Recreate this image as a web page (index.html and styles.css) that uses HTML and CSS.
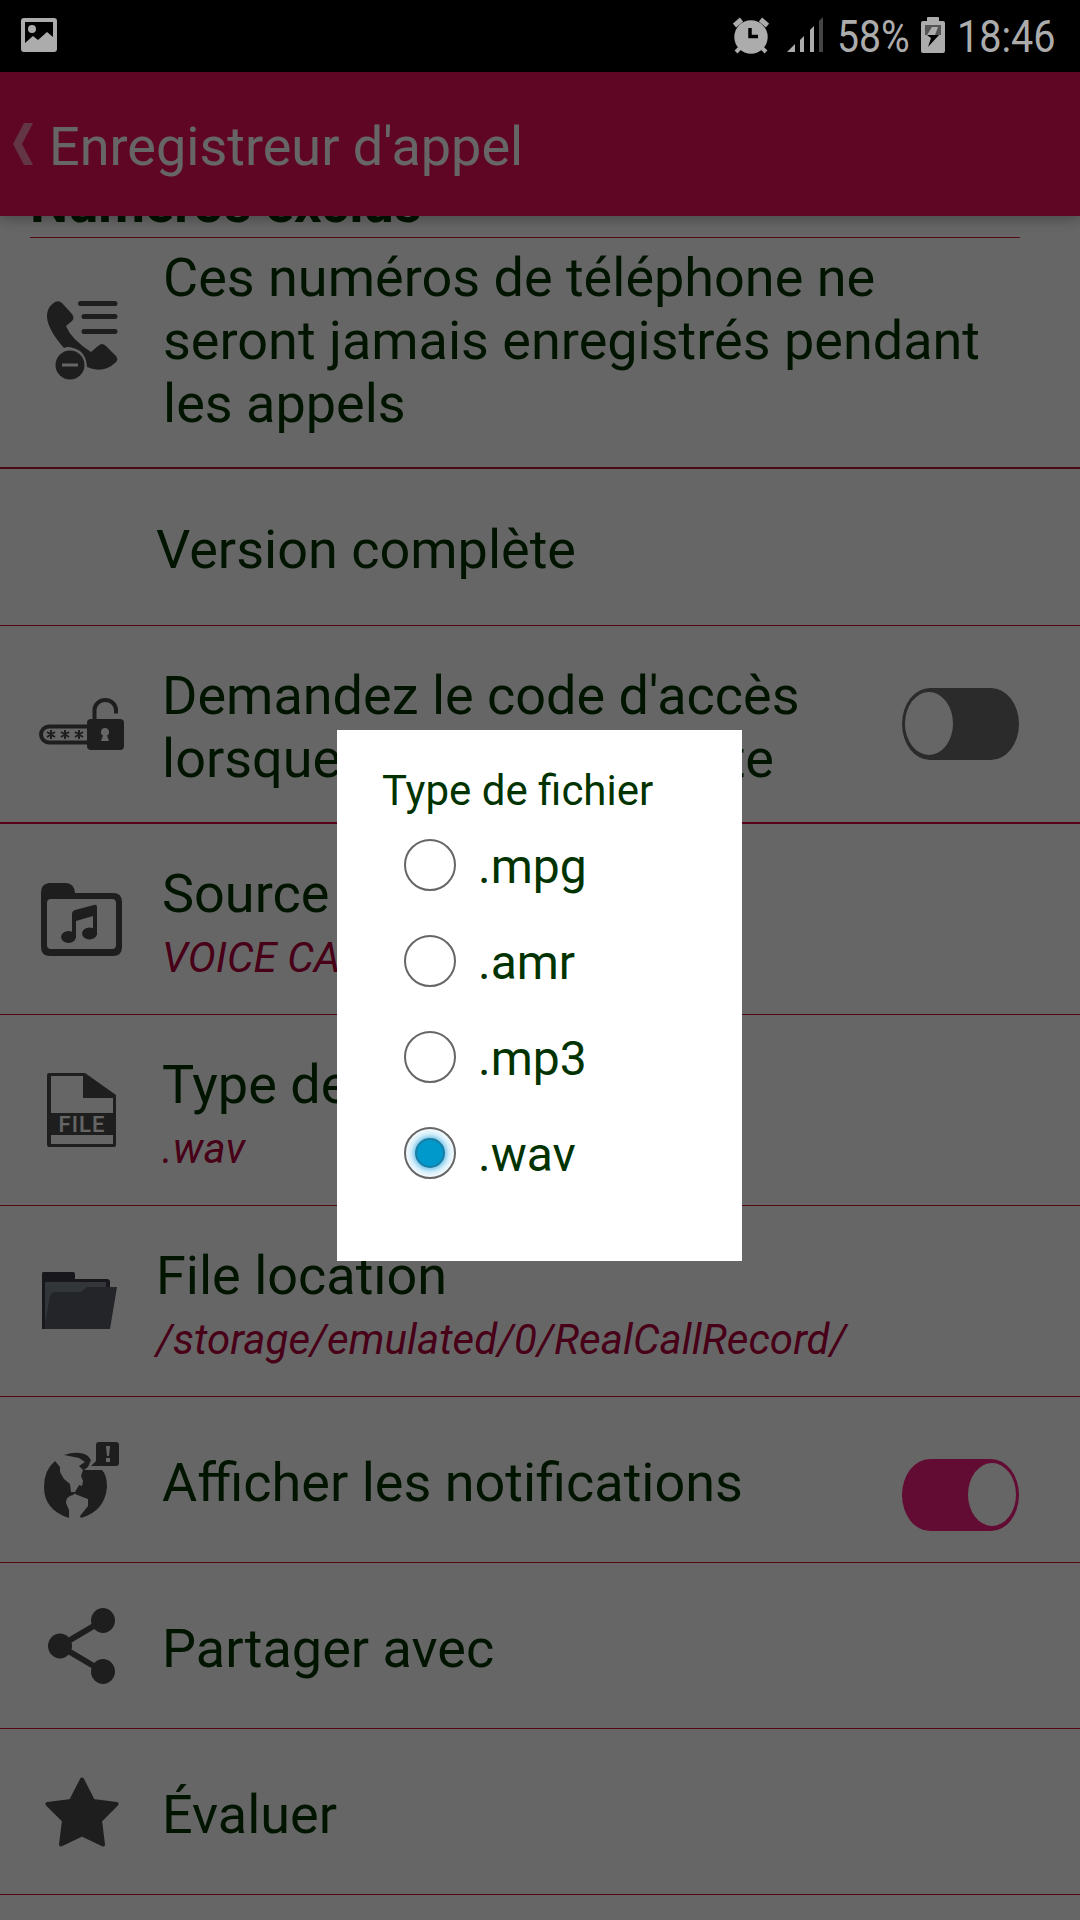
FILE: index.html
```html
<!DOCTYPE html>
<html lang="fr">
<head>
  <meta charset="UTF-8" />
  <meta name="viewport" content="width=device-width, initial-scale=1.0" />
  <title>Enregistreur d'appel</title>
  <link rel="stylesheet" href="styles.css">
</head>
<body>
  <div class="screen">
    <div class="status-bar">
      <svg class="picture" width="36" height="34" viewBox="0 0 36 34">
        <path fill-rule="evenodd" d="M3 0h30a3 3 0 0 1 3 3v28a3 3 0 0 1-3 3H3a3 3 0 0 1-3-3V3a3 3 0 0 1 3-3zM4 4v21l8-7 5 4 9-8 6 5V4z" />
        <circle cx="11" cy="11" r="4" />
      </svg>
      <svg class="alarm" width="36" height="37" viewBox="0 0 36 37">
        <circle cx="18" cy="20" r="16.7" />
        <path class="bells" d="M1.500 8.500l7-6M34.500 8.500l-7-6" />
        <path d="M7 31l-4 4M29 31l4 4" />
        <path class="hands" d="M17 11v8.500h8" />
      </svg>
      <svg class="signal" width="36" height="37" viewBox="0 0 36 37">
        <path d="M0 36l8-8v8zM13 36V24l4-4v16zM23 36V14l4-4v26z" />
        <path class="off" d="M32 36V5l4-4v35z" />
      </svg>
      <span class="percent">58%</span>
      <svg class="battery" width="24" height="36" viewBox="0 0 24 36">
        <path d="M6 4V1q0-1 1-1h10q1 0 1 1v3h4q2 0 2 2v28q0 2-2 2H2q-2 0-2-2V6q0-2 2-2z" />
        <path class="level" d="M4 8h16v10H4z" />
        <path d="M11 10h6l-3 8H6z" />
        <path class="bolt" d="M6 18h12L7 30l3-9z" />
      </svg>
      <span class="time">18:46</span>
    </div>

    <div class="header">
      <svg class="back" width="20" height="42" viewBox="0 0 20 42"><path d="M11 0h9L9 21l11 21h-9L0 21z" /></svg>
      <h1>Enregistreur d'appel</h1>
    </div>

    <div class="settings">
      <div class="section"><h2>Numéros exclus</h2></div>

      <div class="row excluded">
        <svg class="icon" width="71" height="79" viewBox="0 0 71 79">
          <path d="M8 1Q12-1 15 2L25 13Q28 17 25 20L19 25Q24 38 44 51L51 45Q55 41 59 45L69 55Q72 59 68 62Q56 73 40 66Q39 50 26 47Q21 45 17 47Q-1 27 0 13Q1 5 8 1z" />
          <circle cx="23" cy="64" r="14.500" />
          <path class="minus" d="M15 64h16" />
          <path class="bars" d="M33.500 2.500h34.500M37 15.500h31M37 30.500h31" />
        </svg>
        <div class="text"><p>Ces numéros de téléphone ne seront jamais enregistrés pendant les appels</p></div>
      </div>

      <div class="row full-version shifted">
        <span class="icon"></span>
        <div class="text"><p>Version complète</p></div>
      </div>

      <div class="row passcode">
        <svg class="icon" width="85" height="52" viewBox="0 0 85 52">
          <path class="line" d="M50 28.500H10a8 8 0 0 0 0 16h40M55.500 22V12a10.750 10 0 0 1 21.500 0v3.500" />
          <rect x="48" y="21" width="37" height="31" rx="4" />
          <path class="stars" d="M12 32v9M8 34l8 5M16 34l-8 5M26 32v9M22 34l8 5M30 34l-8 5M40 32v9M36 34l8 5M44 34l-8 5" />
          <path class="hole" d="M66 30a4 4 0 0 1 2 7.500l2 5.500h-8l2-5.500a4 4 0 0 1 2-7.500z" />
        </svg>
        <div class="text"><p>Demandez le code d'accès<br>lorsque l'appli est ouverte</p></div>
        <span class="toggle"></span>
      </div>

      <div class="row double">
        <svg class="icon" width="81" height="73" viewBox="0 0 81 73">
          <path fill-rule="evenodd" d="M8 0h17q8 0 9 10h38q9 0 9 9v45q0 9-9 9H9q-9 0-9-9V9q0-8 8-9zM10 16q-4 0-4 4v42q0 4 4 4h61q4 0 4-4V20q0-4-4-4z" />
          <path d="M31 31q0-3 3-4l19-5q3-1 3 2v28h-4V33l-17 5v17h-4z" />
          <ellipse cx="27.500" cy="54" rx="7.500" ry="6" />
          <ellipse cx="48.500" cy="50.500" rx="7.500" ry="6" />
        </svg>
        <div class="text"><p>Source audio</p><p class="value">VOICE CALL</p></div>
      </div>

      <div class="row double">
        <svg class="icon file" width="69" height="74" viewBox="0 0 69 74">
          <path fill-rule="evenodd" d="M2 0h36l31 22v50q0 2-2 2H2q-2 0-2-2V2q0-2 2-2zM4 3v37h62V25H36V3zM4 62v9h62v-9z" />
          <text class="file-label" x="11.500" y="59" textLength="46">FILE</text>
        </svg>
        <div class="text"><p>Type de fichier</p><p class="value">.wav</p></div>
      </div>

      <div class="row double shifted">
        <svg class="icon" width="76" height="58" viewBox="0 0 76 58">
          <path class="folder-back" d="M2 0h30q2 0 2 2v5h32q3 0 3 3v47H1V2q0-2 1-2z" />
          <path class="folder-paper" d="M4 10h61v18L8 54H4z" />
          <path class="folder-front" d="M14 20h26l6-5h30l-7 42H3l6-33q1-4 5-4z" />
        </svg>
        <div class="text"><p>File location</p><p class="value">/storage/emulated/0/RealCallRecord/</p></div>
      </div>

      <div class="row">
        <svg class="icon" width="76" height="76" viewBox="0 0 76 76">
          <path d="M11 19L16 25V30L20 37L26 42L27 50H31L34 45V49L29 53Q22 54 22 61L25 68V76Q0 68 0 45Q0 28 11 19z" />
          <path d="M20 13Q35 8 44 14L47 18L44 25L40 28H58Q63 33 63 45Q61 69 37 76L36 74L44 64V57L36 54L31 52L35 43L38 44L39 39L37 34L39 28L35 24L41 20L35 16z" />
          <path d="M55 0h17q3 0 3 3v18q0 3-3 3H47l5-5V3q0-3 3-3z" />
          <path class="mark" d="M62 4h4l-1 10h-2zM62 16h4v4h-4z" />
        </svg>
        <div class="text"><p>Afficher les notifications</p></div>
        <span class="toggle on"></span>
      </div>

      <div class="row">
        <svg class="icon" width="67" height="76" viewBox="0 0 67 76">
          <path class="link" d="M55 12.500L12 38l43 25.500" />
          <ellipse cx="55" cy="12.500" rx="12" ry="12.500" />
          <ellipse cx="12" cy="38" rx="12" ry="12.500" />
          <ellipse cx="55" cy="63.500" rx="12" ry="12.500" />
        </svg>
        <div class="text"><p>Partager avec</p></div>
      </div>

      <div class="row">
        <svg class="icon" width="74" height="70" viewBox="0 0 74 70">
          <path class="star" d="M37 2.500L48 24L71.500 27L55 43.500L58 67.500L37 57.500L16 67.500L19 43.500L2.500 27L26 24z" />
        </svg>
        <div class="text"><p>Évaluer</p></div>
      </div>
    </div>

    <div class="overlay">
      <div class="dialog">
        <h3>Type de fichier</h3>
        <div class="option"><span class="radio"></span>.mpg</div>
        <div class="option"><span class="radio"></span>.amr</div>
        <div class="option"><span class="radio"></span>.mp3</div>
        <div class="option"><span class="radio checked"></span>.wav</div>
      </div>
    </div>
  </div>
</body>
</html>
```

FILE: styles.css
```css
*, *::before { box-sizing: border-box; }
body { margin: 0; font-family: Roboto, sans-serif; background: #fff; color: #003300; }
h1, h2, h3, p { margin: 0; font-weight: 400; }
.screen { position: relative; width: 1080px; height: 1920px; overflow: hidden; }

/* status bar */
.status-bar { display: flex; height: 72px; padding: 17px 0 0 21px; background: #000; color: #acacac; fill: #acacac; font-size: 45px; line-height: 40px; }
.status-bar svg { flex: none; }
.picture { margin-top: 1px; }
.alarm { margin-left: 676px; }
.alarm path { fill: none; stroke: #acacac; stroke-width: 4; }
.alarm .bells { stroke-width: 5; }
.alarm .hands { stroke: #000; stroke-width: 3.5; }
.signal { margin: -1px 0 0 18px; }
.signal .off { fill: #444; }
.percent, .time { display: block; white-space: nowrap; transform-origin: left; transform: scaleX(0.87); }
.percent { width: 70px; margin-left: 14px; }
.battery { margin-left: 14px; }
.battery .level { fill: #555; }
.battery .bolt { fill: #000; }
.time { width: 96px; margin-left: 12px; transform: scaleX(0.88); }

/* header */
.header { position: relative; z-index: 1; display: flex; height: 144px; padding: 51px 0 0 13px; background: #f00f5e; box-shadow: 0 2px 14px rgba(0,0,0,0.35); }
.back { fill: #fff; opacity: 0.5; }
.header h1 { margin: -8px 0 0 16px; font-size: 54px; line-height: 63px; color: #fff; }

/* settings list */
.settings { display: flow-root; }
.section { height: 22px; margin: 0 60px 0 30px; border-bottom: 1px solid #d01c2c; }
.section h2 { position: relative; top: -44px; font-size: 54px; line-height: 63px; font-weight: 700; }
.row { display: grid; grid-template-columns: 162px 1fr auto; height: 166px; padding-right: 61px; border-bottom: 1px solid #d01c2c; fill: #4c4c4c; font-size: 54px; line-height: 63px; }
.row.shifted { grid-template-columns: 156px 1fr auto; }
.row.double { height: 191px; }
.row.excluded { grid-template-columns: 163px 1fr; height: 231px; border-bottom: 2px solid #b81430; padding-right: 60px; }
.row.full-version { height: 157px; }
.row.passcode { height: 198px; border-bottom: 2px solid #dc0440; }
.row .icon { place-self: center; margin-left: 1px; }
.row .file { margin-left: 0; }
.excluded .icon { margin-bottom: 25px; }
.text { padding-top: 54px; }
.double .text, .passcode .text { padding-top: 38px; }
.full-version .text { padding-top: 49px; }
.excluded .text { padding-top: 8px; }
.value { margin-top: 8px; font-size: 42px; line-height: 49px; letter-spacing: 0.06px; font-style: italic; color: #b4003c; }

/* icons */
.minus { stroke: #fff; stroke-width: 3; }
.bars { stroke: #4c4c4c; stroke-width: 5; stroke-linecap: round; }
.line { fill: none; stroke: #4c4c4c; stroke-width: 4; }
.stars { stroke: #4c4c4c; stroke-width: 2; }
.hole, .mark, .file-label { fill: #fff; }
.file-label { font: 500 22px Roboto, sans-serif; }
.folder-back { fill: #3e3e46; }
.folder-paper { fill: #7e878e; }
.folder-front { fill: #5a5c66; }
.link { fill: none; stroke: #4c4c4c; stroke-width: 6; }
.star { stroke: #4c4c4c; stroke-width: 4; stroke-linejoin: round; }

.toggle { width: 117px; height: 72px; margin-top: 62px; padding: 4px 3px; border-radius: 28px / 36px; background: #6c6c6c; }
.toggle::before { content: ""; display: block; width: 48px; height: 63px; border-radius: 50%; background: #fff; }
.toggle.on { background: #f61e80; }
.toggle.on::before { margin-left: auto; }

/* dialog */
.overlay { position: absolute; z-index: 2; top: 72px; left: 0; width: 1080px; height: 1848px; padding: 658px 0 0 337px; background: rgba(0,0,0,0.6); }
.dialog { width: 405px; height: 531px; padding: 36px 45px; background: #fff; }
.dialog h3 { margin-bottom: 2px; font-size: 42px; line-height: 49px; }
.option { display: flex; height: 96px; padding: 22px 0 0 22px; font-size: 48px; line-height: 56px; }
.radio { width: 52px; height: 52px; margin-right: 22px; border: 2px solid #666; border-radius: 50%; }
.radio.checked { padding: 9px; background: radial-gradient(circle closest-side, #7cc8ea 60%, #d4eefa 80%, #f6fbfe 100%); }
.radio.checked::before { content: ""; display: block; width: 30px; height: 30px; border: 2px solid #1c7da3; border-radius: 50%; background: #0099cc; }
```
